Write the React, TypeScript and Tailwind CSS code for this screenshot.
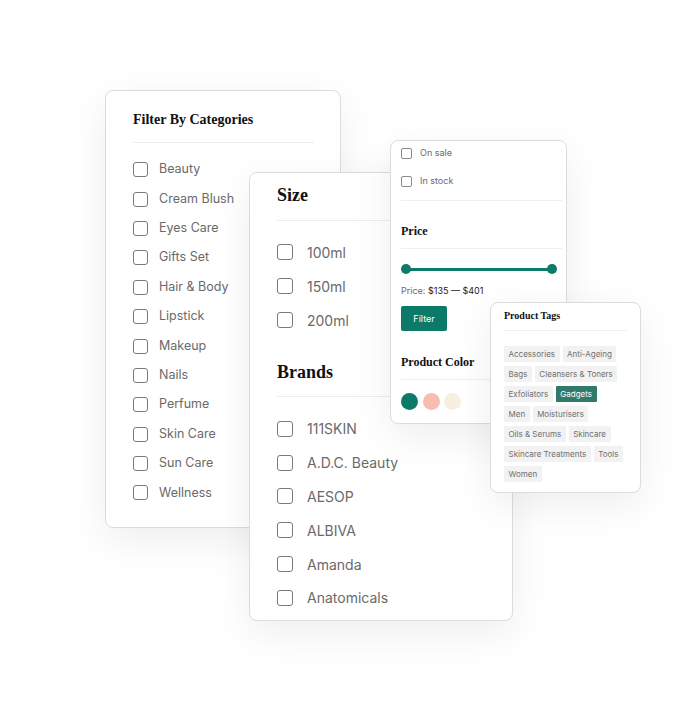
import React from "react";

const sans = { fontFamily: "Inter, 'Noto Sans', sans-serif" };
const display = { fontFamily: "'Liberation Serif', 'DejaVu Serif', serif" };

const categories = ["Beauty", "Cream Blush", "Eyes Care", "Gifts Set", "Hair & Body", "Lipstick", "Makeup", "Nails", "Perfume", "Skin Care", "Sun Care", "Wellness"];
const sizes = ["100ml", "150ml", "200ml"];
const brands = ["111SKIN", "A.D.C. Beauty", "AESOP", "ALBIVA", "Amanda", "Anatomicals"];
const tags = ["Accessories", "Anti-Ageing", "Bags", "Cleansers & Toners", "Exfoliators", "Gadgets", "Men", "Moisturisers", "Oils & Serums", "Skincare", "Skincare Treatments", "Tools", "Women"];

const card = "absolute bg-white border border-[#dcdcdc] rounded-lg shadow-[0_12px_40px_rgba(0,0,0,0.07)]";

export default function App() {
  return (
    <div className="relative w-[678px] h-[710px] bg-white overflow-hidden" style={sans}>
      {/* Categories */}
      <div className={`${card} left-[105px] top-[90px] w-[236px] h-[438px] pl-[27px] pr-[26px] pt-[19px]`}>
        <h2 className="text-[14px] leading-5 font-bold text-[#111]" style={display}>Filter By Categories</h2>
        <div className="mt-3 h-px bg-[#ececec]" />
        <div className="mt-[12px] flex flex-col">
          {categories.map((c) => (
            <div key={c} className="h-[29.4px] flex items-center gap-[11px]">
              <span className="w-[15px] h-[15px] rounded-[3px] border-[1.5px] border-[#7a7a7a] shrink-0" />
              <span className="text-[12.5px] text-[#6a6a6a]">{c}</span>
            </div>
          ))}
        </div>
      </div>

      {/* Size & Brands */}
      <div className={`${card} left-[249px] top-[172px] w-[264px] h-[449px] pl-[27px] pr-[26px] pt-[10px]`}>
        <h2 className="text-[18px] leading-6 font-bold text-[#111]" style={display}>Size</h2>
        <div className="mt-[13px] h-px bg-[#ececec]" />
        <div className="mt-[14px] flex flex-col">
          {sizes.map((s) => (
            <div key={s} className="h-[34px] flex items-center gap-[14px]">
              <span className="w-[16px] h-[16px] rounded-[3px] border-[1.5px] border-[#7a7a7a] shrink-0" />
              <span className="text-[14px] text-[#6a6a6a]">{s}</span>
            </div>
          ))}
        </div>
        <h2 className="mt-[23px] text-[18px] leading-6 font-bold text-[#111]" style={display}>Brands</h2>
        <div className="mt-[12px] h-px bg-[#ececec]" />
        <div className="mt-[15px] flex flex-col">
          {brands.map((s) => (
            <div key={s} className="h-[33.8px] flex items-center gap-[14px]">
              <span className="w-[16px] h-[16px] rounded-[3px] border-[1.5px] border-[#7a7a7a] shrink-0" />
              <span className="text-[14px] text-[#6a6a6a]">{s}</span>
            </div>
          ))}
        </div>
      </div>

      {/* Status / Price / Color */}
      <div className={`${card} left-[390px] top-[140px] w-[177px] h-[284px] pl-[10px] pr-[4px] pt-[6px]`}>
        <div className="flex flex-col gap-[16px]">
          {["On sale", "In stock"].map((s) => (
            <div key={s} className="h-[12px] flex items-center gap-[8px]">
              <span className="w-[11px] h-[11px] rounded-[2px] border border-[#8a8a8a] shrink-0" />
              <span className="text-[9px] text-[#6a6a6a]">{s}</span>
            </div>
          ))}
        </div>
        <div className="mt-[13px] h-px bg-[#efefef]" />
        <h3 className="mt-[22px] text-[12px] leading-4 font-bold text-[#111]" style={display}>Price</h3>
        <div className="mt-[9px] h-px bg-[#efefef]" />
        <div className="mt-[15px] relative h-[10px] mr-[5px]">
          <div className="absolute left-[5px] right-[5px] top-[3.5px] h-[3px] bg-[#0b7a69]" />
          <div className="absolute left-0 top-0 w-[10px] h-[10px] rounded-full bg-[#0b7a69]" />
          <div className="absolute right-0 top-0 w-[10px] h-[10px] rounded-full bg-[#0b7a69]" />
        </div>
        <div className="mt-[11px] text-[9px] leading-3 text-[#6a6a6a]">
          Price: <span className="text-[#222]">$135 — $401</span>
        </div>
        <button className="mt-[9px] w-[46px] h-[25px] rounded-[2px] bg-[#0b7a69] text-white text-[9px] flex items-center justify-center">Filter</button>
        <h3 className="mt-[23px] text-[12px] leading-4 font-bold text-[#111]" style={display}>Product Color</h3>
        <div className="mt-[9px] h-px bg-[#efefef]" />
        <div className="mt-[13px] flex gap-[4.5px]">
          <span className="w-[17px] h-[17px] rounded-full bg-[#0b7a69]" />
          <span className="w-[17px] h-[17px] rounded-full bg-[#f9bcb0]" />
          <span className="w-[17px] h-[17px] rounded-full bg-[#f8efe2]" />
        </div>
      </div>

      {/* Tags */}
      <div className={`${card} left-[490px] top-[302px] w-[151px] h-[191px] pl-[13px] pr-[13px] pt-[6px]`}>
        <h3 className="text-[10px] leading-[14px] font-bold text-[#111]" style={display}>Product Tags</h3>
        <div className="mt-[7px] h-px bg-[#efefef]" />
        <div className="mt-[15px] w-[121px] flex flex-wrap gap-x-[3px] gap-y-[4px]">
          {tags.map((t) => (
            <span
              key={t}
              className={`h-[16px] px-[4.5px] flex items-center text-[8px] rounded-[1px] ${t === "Gadgets" ? "bg-[#2f7a6c] text-white" : "bg-[#f2f2f2] text-[#707070]"}`}
            >
              {t}
            </span>
          ))}
        </div>
      </div>
    </div>
  );
}
